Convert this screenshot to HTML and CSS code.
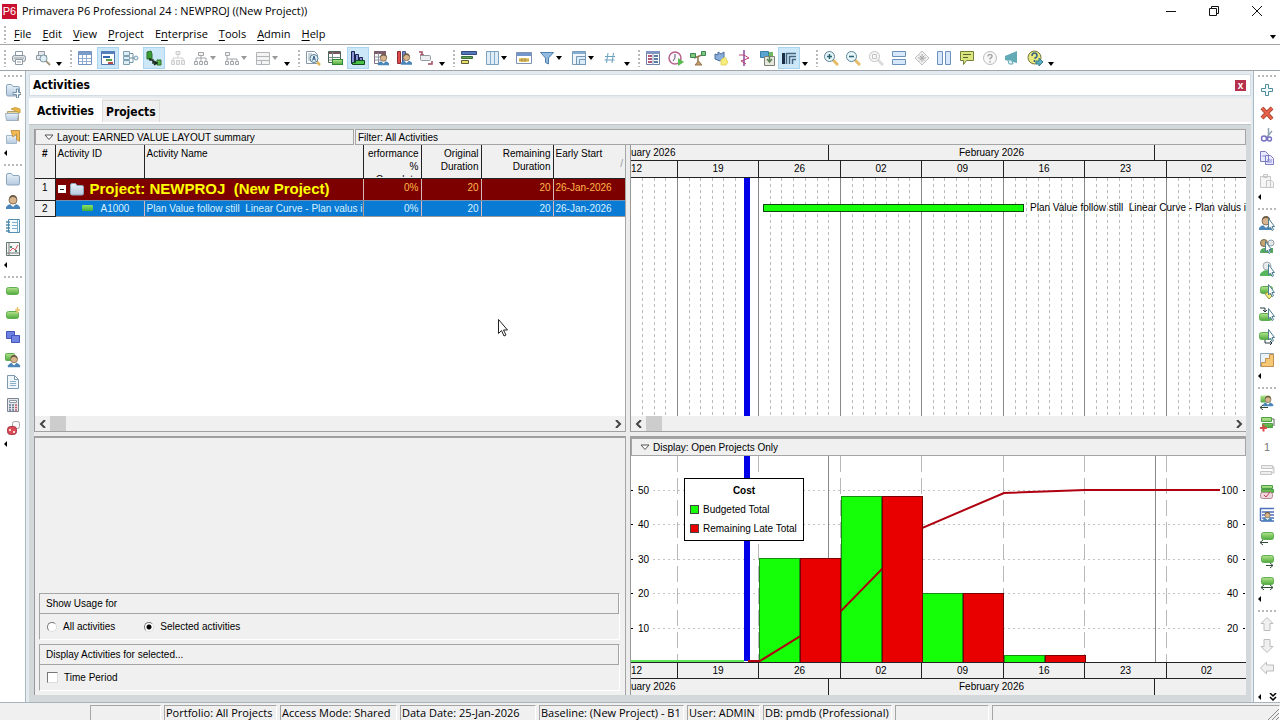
FILE: index.html
```html
<!DOCTYPE html>
<html lang="en">
<head>
    <meta charset="UTF-8">
    <meta name="viewport" content="width=device-width, initial-scale=1.0">
    <title>Primavera P6 Professional 24 : NEWPROJ ((New Project))</title>
    <link rel="stylesheet" href="styles.css">
</head>
<body>
    <!-- icon sprite -->
    <svg class="sprite" aria-hidden="true">
        <defs>
            <linearGradient id="green" x1="0" y1="0" x2="0" y2="1">
                <stop offset="0" stop-color="#b4e48e"/><stop offset="1" stop-color="#4eaa3c"/>
            </linearGradient>
            <linearGradient id="folderFill" x1="0" y1="0" x2="0" y2="1">
                <stop offset="0" stop-color="#e8f1fa"/><stop offset="1" stop-color="#b4c9de"/>
            </linearGradient>
        </defs>
        <symbol id="pill" viewBox="0 0 16 16"><rect x="1.5" y="4.5" width="12" height="7" rx="2" fill="url(#green)" stroke="#5fae52"/></symbol>
        <symbol id="person" viewBox="0 0 16 16"><path d="M1 15v-2q2-3 5-3h4q3 0 5 3v2z" fill="#4a86b8"/><path d="M5 10l3 3 3-3z" fill="#fff"/><circle cx="8" cy="6" r="4" fill="#d8b48c" stroke="#85735a"/><path d="M4 6q0-5 4-5t4 5q-1-3-4-3T4 6z" fill="#6c5c48"/></symbol>
        <symbol id="pointer" viewBox="0 0 16 16"><path d="M9.500 3.500v10.500l2-2 1.500 3.500 1.500-.8-1.500-3.200h2.500z" fill="#fff" stroke="#4f7f93"/></symbol>
        <symbol id="lens" viewBox="0 0 16 16"><path d="M10 10l5 5" stroke="#e4bd66" stroke-width="3"/><circle cx="6.500" cy="6.500" r="5" fill="#e6f4fb" stroke="#5c8494"/></symbol>
        <symbol id="folder" viewBox="0 0 16 16"><path d="M1.500 4q0-1.500 1.500-1.500h3.500l1.500 2h5q1.500 0 1.500 1.500v6.500q0 1.500-1.500 1.500H3q-1.500 0-1.500-1.500z" fill="url(#folderFill)" stroke="#8ba5bd"/></symbol>

        <symbol id="print" viewBox="0 0 16 16"><path d="M4.500 6V1.500h7V6" fill="#fff" stroke="#8f9ba4"/><rect x="1.500" y="5.500" width="13" height="6" rx="2" fill="#dfe4e8" stroke="#87939c"/><path d="M4.500 9.500h7v5h-7z" fill="#fff" stroke="#8f9ba4"/><path d="M3 8h10M6 12h4" stroke="#9ba6ad"/></symbol>
        <symbol id="preview" viewBox="0 0 16 16"><path d="M3.500 5V1.500h6V5M1.500 5.500h10v4h-10z" fill="#e6eaee" stroke="#8f9ba4"/><circle cx="8.500" cy="8.500" r="3.500" fill="#e1f0f6" stroke="#7892a0"/><path d="M11 11l4 4" stroke="#a29880" stroke-width="2"/></symbol>
        <symbol id="table" viewBox="0 0 16 16"><path d="M1.500 1.500h13v13h-13z" fill="#fff" stroke="#7292c0"/><path d="M2 2h12v3H2z" fill="#7b9cca"/><path d="M2 8.500h12M2 11.500h12M5.500 5v9M9.500 5v9" stroke="#94abd0"/></symbol>
        <symbol id="gantt" viewBox="0 0 16 16"><path d="M1.500 1.500h13v13h-13z" fill="#fff" stroke="#5277ad"/><path d="M1 1h14v3H1z" fill="#5580b9"/><path d="M3 6h7v2H3z" fill="#3367b0"/><path d="M6 9h6v2H6z" fill="#57a14a"/><path d="M8 12h5v2H8z" fill="#bc4b4b"/></symbol>
        <symbol id="network" viewBox="0 0 16 16"><path d="M6 3.500h4v9H6M10 8h2M4 8h6" fill="none" stroke="#6b90a2"/><path d="M.5 1.500h6v4h-6zM.5 6.500h6v3h-6zM.5 10.500h6v4h-6z" fill="#dfeef5" stroke="#7c9fb2"/><circle cx="13" cy="8" r="2" fill="#e1edf3" stroke="#7c9fb2"/></symbol>
        <symbol id="trace" viewBox="0 0 16 16"><path d="M1 2l4-1 1 3v5H1z" fill="#3d9c34" stroke="#2b6e28"/><path d="M11 10h4v5h-4z" fill="#58b64c" stroke="#2b6e28"/><path d="M4 8v2h3v3h4M8 11l3 2-3 2" fill="none" stroke="#16291a" stroke-width="1.500"/></symbol>
        <symbol id="tree" viewBox="0 0 16 16"><path d="M8 5v3M3 11V8h10v3M8 8v3" fill="none" stroke="#a2a6a8"/><path d="M5.500 2.500h5v3h-5zM1.500 11.500h3v3h-3zM6.500 11.500h3v3h-3zM11.500 11.500h3v3h-3z" fill="#f3f3f3" stroke="#a2a6a8"/></symbol>
        <symbol id="treelight" viewBox="0 0 16 16"><path d="M8 5v3M3 11V8h10v3" fill="none" stroke="#d0d0d0"/><path d="M6 1.500h4v3H6zM1.500 10.500h3v4h-3zM6.500 10.500h3v4h-3zM11.500 10.500h3v4h-3z" fill="#eee" stroke="#cdcdcd"/></symbol>
        <symbol id="branch" viewBox="0 0 16 16"><path d="M3 5v4h10v2M8 9v2M3 9v2" fill="none" stroke="#a2a6a8"/><path d="M1.500 2.500h4v3h-4zM1.500 11.500h3v3h-3zM6.500 11.500h3v3h-3zM11.500 11.500h3v3h-3z" fill="#f3f3f3" stroke="#a2a6a8"/></symbol>
        <symbol id="form" viewBox="0 0 16 16"><path d="M1.500 2.500h13v12h-13zM2 6.500h12M2 10.500h12M6.500 10v4" fill="#f4f4f4" stroke="#b2b5b6"/></symbol>
        <symbol id="docfind" viewBox="0 0 16 16"><path d="M1.500 1.500h8l3 3v9h-11z" fill="#fff" stroke="#8598a8"/><path d="M3 4h4M3 6h3M3 8h2M3 10h2" stroke="#9aabba"/><circle cx="9" cy="8.500" r="4" fill="#e1f2fb" stroke="#577c95"/><path d="M7.500 10.500L9 6l1.500 4.500M8 9h2" fill="none" stroke="#3c5f7e"/><path d="M12 12l3 3" stroke="#dfb65a" stroke-width="2.500"/></symbol>
        <symbol id="sheet" viewBox="0 0 16 16"><path d="M1.500 1.500h12v11h-12z" fill="#fff" stroke="#4b6456"/><path d="M2 2h11v2H2z" fill="#7d5560"/><path d="M2 7.500h11M2 10h11M5.500 2v10" stroke="#788b80"/><rect x="5.500" y="9.500" width="10" height="5" fill="url(#green)" stroke="#2f8a36"/></symbol>
        <symbol id="bars" viewBox="0 0 16 16"><path d="M1.500 1.500h3v12h-3zM5.500 4.500h3v9h-3zM9.500 7.500h3v6h-3z" fill="#8793d2" stroke="#19234d"/><path d="M5.500 10.500h9v4h-12v-2h3z" fill="#4ac048" stroke="#134c1e"/></symbol>
        <symbol id="ressheet" viewBox="0 0 16 16"><path d="M1.500 1.500h11v12h-11z" fill="#fff" stroke="#7f7282"/><path d="M1 1h12v3H1z" fill="#7c5d6b"/><path d="M2 7h10M2 10h10M5.500 3v10" stroke="#8c93a0"/><use href="#person" x="4" y="3" width="13" height="13"/></symbol>
        <symbol id="resbars" viewBox="0 0 16 16"><path d="M1.500 1.500h3v12h-3z" fill="#df4a4a" stroke="#8f2d36"/><path d="M6.500 1.500h3v12h-3z" fill="#7288cc" stroke="#47598f"/><use href="#person" x="4" y="2" width="13" height="14"/></symbol>
        <symbol id="reslink" viewBox="0 0 16 16"><path d="M1 2h3v3M2 5h4M10 14h4v-3" fill="none" stroke="#9f4a5b" stroke-width="1.500"/><rect x="2.500" y="5.500" width="10" height="5" rx="1" fill="#eceff0" stroke="#929b9f"/></symbol>
        <symbol id="layoutbars" viewBox="0 0 16 16"><path d="M.5 1.500h15v3H.5z" fill="#5379bb" stroke="#324b80"/><path d="M.5 6.500h11v2H.5z" fill="#64a35a" stroke="#397038"/><path d="M.5 10.500h7v3h-7z" fill="#e7df66" stroke="#5f5d36"/></symbol>
        <symbol id="columns" viewBox="0 0 16 16"><path d="M2.500 1.500h12v13h-12z" fill="#dfedf8" stroke="#7da1bd"/><path d="M6.500 2v12M10.500 2v12" stroke="#86abc8"/></symbol>
        <symbol id="timescale" viewBox="0 0 16 16"><path d="M.5 2.500h15v11H.5z" fill="#fff" stroke="#7e91b5"/><path d="M1 3h14v3H1z" fill="#7397cb"/><path d="M3 8h10v4H3z" fill="#eed06f"/><path d="M6 8v4M9 8v4M3 10h10" stroke="#a98c4d"/></symbol>
        <symbol id="filter" viewBox="0 0 16 16"><path d="M1.500 2.500h13L9.500 8v6l-3-1.500V8z" fill="#91bbe0" stroke="#517faa"/></symbol>
        <symbol id="group" viewBox="0 0 16 16"><path d="M1.500 1.500h13v13h-13z" fill="#eff6fb" stroke="#7b9cb7"/><path d="M2 2h12v2H2z" fill="#85add0"/><path d="M5.500 6.500h9v8h-9zM8.500 9.500h6v5h-6z" fill="#dcebf6" stroke="#7497b5"/></symbol>
        <symbol id="hash" viewBox="0 0 16 16"><path d="M6 3L4.500 13M11.500 3L10 13M3 6.500h10M2.500 10h10" fill="none" stroke="#6ba1bf"/></symbol>
        <symbol id="details" viewBox="0 0 16 16"><path d="M1.500 1.500h13v13h-13z" fill="#fff" stroke="#6d7fa5"/><path d="M1 1h14v3H1z" fill="#7f96c3"/><path d="M3 6h4M3 9h4M3 12h4" stroke="#ad5876" stroke-width="2"/><path d="M9 6h4M9 9h4M9 12h4" stroke="#597da1" stroke-width="2"/><path d="M8 4v11" stroke="#8f9dbb"/></symbol>
        <symbol id="clock" viewBox="0 0 16 16"><circle cx="7" cy="8" r="6" fill="#fff8fc" stroke="#b8628b" stroke-width="1.500"/><path d="M7 4v4l-2 3" fill="none" stroke="#565671"/><path d="M10 8l6 4-6 4z" fill="#5abb51"/></symbol>
        <symbol id="level" viewBox="0 0 16 16"><path d="M4 8l8-3M8 7v5" stroke="#947652" stroke-width="1.500"/><path d="M5 15h7l-3.500-4z" fill="#c49965" stroke="#947652"/><path d="M.5 3.500h5v4h-5zM11.500 1.500h4v4h-4z" fill="#7fc77d" stroke="#3b8652"/></symbol>
        <symbol id="spot" viewBox="0 0 16 16"><path d="M2 4l3 1V2l3 2 3-2v6l-4 3-5-2z" fill="#8aaedb" stroke="#4c6d9b"/><path d="M8 10l4-3 3 5-2 3H8z" fill="#f6ec7c" stroke="#e3d768"/></symbol>
        <symbol id="progress" viewBox="0 0 16 16"><path d="M8 0v16" stroke="#8748a3" stroke-width="1.500"/><path d="M3 5h5l5 3-8 3 5 3" fill="none" stroke="#bd4370"/></symbol>
        <symbol id="store" viewBox="0 0 16 16"><path d="M1.500 1.500h8v6h-8z" fill="#5aa4d1" stroke="#397da5"/><path d="M5.500 6.500h10v9h-10z" fill="#e7e7e0" stroke="#7c8174"/><path d="M10.500 4v7M8 9l2.500 3L13 9" fill="none" stroke="#5d8455" stroke-width="1.500"/><path d="M10 2h4v4h-4z" fill="#70b761"/></symbol>
        <symbol id="legend" viewBox="0 0 16 16"><path d="M1 3h3v11H1z" fill="#1b3046"/><path d="M5.500 14V3.500H15M8.500 14V6.500H15M11.500 14V9.500H15" fill="none" stroke="#44647f" stroke-width="1.500"/></symbol>
        <symbol id="zoomin" viewBox="0 0 16 16"><use href="#lens"/><path d="M4 6.500h5M6.500 4v5" stroke="#2b646e" stroke-width="1.500"/></symbol>
        <symbol id="zoomout" viewBox="0 0 16 16"><use href="#lens"/><path d="M4 6.500h5" stroke="#2b646e" stroke-width="1.500"/></symbol>
        <symbol id="zoomoff" viewBox="0 0 16 16"><path d="M10 10l5 5" stroke="#dcdcdc" stroke-width="3"/><circle cx="6.500" cy="6.500" r="5" fill="#f7f7f7" stroke="#c4c4c4"/><path d="M4.500 4.500h4v4h-4z" fill="none" stroke="#c4c4c4"/></symbol>
        <symbol id="splith" viewBox="0 0 16 16"><path d="M1.500 1.500h13v5h-13zM1.500 9.500h13v5h-13z" fill="#d7e8fb" stroke="#6d91bd"/></symbol>
        <symbol id="splitv" viewBox="0 0 16 16"><path d="M1.500 1.500h5v13h-5zM9.500 1.500h5v13h-5z" fill="#d7e8fb" stroke="#6d91bd"/></symbol>
        <symbol id="diamond" viewBox="0 0 16 16"><path d="M8 1l7 7-7 7-7-7z" fill="#f0f0f0" stroke="#c0c0c0"/><path d="M8 4v8M4 8h8M5.500 5.500l5 5M10.500 5.500l-5 5" stroke="#a9a9a9"/></symbol>
        <symbol id="note" viewBox="0 0 16 16"><path d="M1.500 1.500h13v9h-7l-3 4v-4h-3z" fill="#dce57e" stroke="#75803a"/><path d="M4 4.500h8M4 7.500h5" stroke="#58632f"/></symbol>
        <symbol id="helpoff" viewBox="0 0 16 16"><circle cx="8" cy="8" r="6.500" fill="#f8f8f8" stroke="#bcbcbc"/><path d="M6 6.500q0-2 2-2t2 2q0 1-2 2v1M8 11v1.500" fill="none" stroke="#aaa" stroke-width="1.500"/></symbol>
        <symbol id="horn" viewBox="0 0 16 16"><path d="M1 6l12-5v12L1 10z" fill="#62abb6"/><path d="M4 10l1 4h4l-1-3" fill="#e3f1f3" stroke="#62abb6"/></symbol>
        <symbol id="help" viewBox="0 0 16 16"><circle cx="7.500" cy="7.500" r="6.500" fill="#e8e87d" stroke="#74753a"/><path d="M5 6q0-3 2.500-3T10 6q0 1-2.500 2.500M7.500 10v2" fill="none" stroke="#355f80" stroke-width="1.500"/><path d="M9 11h3V8l4 4-4 4v-2H9z" fill="#58aebd" stroke="#377c8c"/></symbol>

        <symbol id="addfolder" viewBox="0 0 16 16"><use href="#folder"/><path d="M11.500 7v3.500H8v2h3.500V16h2v-3.500H16v-2h-2.500V7z" fill="#fff" stroke="#6d8ea4"/></symbol>
        <symbol id="openfolder" viewBox="0 0 16 16"><path d="M2.500 5.500h11v9h-11z" fill="#e4d59b" stroke="#b39e6b"/><path d="M6 3q4-3 9 0v4l-4-2z" fill="#eeb93f" stroke="#c9a048"/><path d="M.5 7.500h13l-1 7h-11z" fill="url(#folderFill)" stroke="#9db1c0"/></symbol>
        <symbol id="closefolder" viewBox="0 0 16 16"><path d="M1.500 6.500h10v8h-10z" fill="url(#folderFill)" stroke="#a3b9cb"/><path d="M6 1.500h8.500v11l-3-2V5L8 8z" fill="#f2ba54" stroke="#c2914b"/></symbol>
        <symbol id="book" viewBox="0 0 16 16"><path d="M3.500 1.500h11v13h-11z" fill="#f5fbff" stroke="#538fae"/><path d="M1 4h4M1 7h4M1 10h4M1 13h4" stroke="#528bac" stroke-width="1.500"/><path d="M7 4.500h6M7 7.500h6M7 10.500h6M12.500 2v12" stroke="#80b1cb"/></symbol>
        <symbol id="chart" viewBox="0 0 16 16"><path d="M1.500 1.500h13v13h-13z" fill="#f4f5f5" stroke="#61766c"/><path d="M4 2v12M2 12h12" stroke="#777"/><path d="M5 10l3-3 2 2 3-5" fill="none" stroke="#d24f5e"/><path d="M5 5h2v2H5zM10 9h2v2h-2z" fill="#4e8872"/></symbol>
        <symbol id="addpill" viewBox="0 0 16 16"><use href="#pill" y="1"/><path d="M12.500 1v6M10 4h5" stroke="#e8c368" stroke-width="1.500"/></symbol>
        <symbol id="windows" viewBox="0 0 16 16"><path d="M1.500 2.500h8v7h-8z" fill="#6d80df" stroke="#4355b8"/><path d="M6.500 6.500h8v7h-8z" fill="#7183e3" stroke="#4355b8"/></symbol>
        <symbol id="pillperson" viewBox="0 0 16 16"><rect x=".5" y="1.500" width="9" height="7" rx="1" fill="url(#green)" stroke="#62aa52"/><use href="#person" x="2" y="2" width="14" height="14"/></symbol>
        <symbol id="doc" viewBox="0 0 16 16"><path d="M2.500 1.500h7l4 4v9h-11zM9.500 1.500v4h4" fill="#f0f7fc" stroke="#7d9ab1"/><path d="M5 7.500h6M5 9.500h6M5 11.500h6" stroke="#8cafc8"/></symbol>
        <symbol id="calc" viewBox="0 0 16 16"><path d="M2.500 1.500h11v13h-11z" fill="#e5e8ed" stroke="#7b8491"/><path d="M4.500 3.500h7v2h-7z" fill="#fff" stroke="#8f9aa7"/><path d="M4 8h2M7 8h2M4 10.500h2M7 10.500h2M4 13h2M7 13h2" stroke="#65758a" stroke-width="1.500"/><path d="M10 8h2M10 10.500h2M10 13h2" stroke="#c65b62" stroke-width="1.500"/></symbol>
        <symbol id="dice" viewBox="0 0 16 16"><rect x="7.500" y="1.500" width="7" height="7" rx="2" fill="#f8f8f8" stroke="#a6a6a6"/><rect x="2.500" y="6.500" width="9" height="8" rx="3" fill="#d84b57" stroke="#a83643"/><path d="M4 10h2M8 12h2M10 4h1M12 6h1" stroke="#fff" stroke-width="1.500"/></symbol>

        <symbol id="plus" viewBox="0 0 16 16"><path d="M6.500 2.500h3v4h4v3h-4v4h-3v-4h-4v-3h4z" fill="#f4fbfd" stroke="#4f8d9d"/></symbol>
        <symbol id="delete" viewBox="0 0 16 16"><path d="M3 3l10 11M13 3L3 13" stroke="#a13e2b" stroke-width="4"/><path d="M3 3l10 11M13 3L3 13" stroke="#e6614a" stroke-width="2.500"/></symbol>
        <symbol id="cut" viewBox="0 0 16 16"><path d="M9.500 1v9M13 4l-6 7" stroke="#92a3b3" stroke-width="1.500"/><circle cx="5" cy="11.500" r="2.500" fill="none" stroke="#7973c4" stroke-width="1.500"/><circle cx="10.500" cy="12" r="2" fill="none" stroke="#7973c4" stroke-width="1.500"/></symbol>
        <symbol id="copy" viewBox="0 0 16 16"><path d="M1.500 1.500h5l3 3v7h-8zM6.500 5.500h5l3 3v6h-8z" fill="#e9e9ff" stroke="#7e7bc5"/><path d="M3 6h3M8 10h5M8 12h5" stroke="#8d8ad0"/></symbol>
        <symbol id="paste" viewBox="0 0 16 16"><path d="M1.500 3.500h10v11h-10zM4.500 1.500h4v3h-4zM7.500 7.500h5l2 2v5h-7z" fill="#f5f5f5" stroke="#c7c7c7"/></symbol>
        <symbol id="assignres" viewBox="0 0 16 16"><use href="#person" x="-1"/><use href="#pointer"/></symbol>
        <symbol id="assignrole" viewBox="0 0 16 16"><path d="M1 15q0-5 5-5h8v5z" fill="#55a95f"/><circle cx="5" cy="5" r="3.500" fill="#c8a673" stroke="#77654c"/><circle cx="12" cy="5" r="3" fill="#e4e8e8" stroke="#95a3a7"/><use href="#pointer" x="-3"/></symbol>
        <symbol id="role" viewBox="0 0 16 16"><path d="M1 15v-2q3-4 7-4t7 6z" fill="#55b85c"/><circle cx="8" cy="5" r="4" fill="#e6eaec" stroke="#a4acb0"/><use href="#pointer"/></symbol>
        <symbol id="assigncode" viewBox="0 0 16 16"><use href="#pill" y="-2"/><path d="M9 8l4 4-3 3-4-5z" fill="#f2ed78" stroke="#99974a"/><use href="#pointer" y="-3"/></symbol>
        <symbol id="assignpred" viewBox="0 0 16 16"><use href="#pill" x="-1" y="3"/><path d="M1 2h5v4M4 4l2 2 2-2" fill="none" stroke="#26393c"/><use href="#pointer" y="-1"/></symbol>
        <symbol id="assignsucc" viewBox="0 0 16 16"><use href="#pill" x="-1" y="-1"/><path d="M6 11v3h7M11 12l2 2-2 2" fill="none" stroke="#26393c"/><use href="#pointer" y="-3"/></symbol>
        <symbol id="step" viewBox="0 0 16 16"><path d="M1.500 1.500h13v13h-13z" fill="#eaf2fa" stroke="#93a4b4"/><path d="M2.500 14.500v-4h4v-4h4v-4h4v12z" fill="#f5c875" stroke="#c6914e"/></symbol>
        <symbol id="pillleft" viewBox="0 0 16 16"><use href="#pill" x="1" y="-2"/><path d="M1 12.500h8M4 10l-3 2.500L4 15" fill="none" stroke="#31493a"/></symbol>
        <symbol id="pillright" viewBox="0 0 16 16"><use href="#pill" x="1" y="-2"/><path d="M7 12.500h7M11 10l3 2.500-3 2.500" fill="none" stroke="#31493a"/></symbol>
        <symbol id="pillboth" viewBox="0 0 16 16"><use href="#pill" x="1" y="-2"/><path d="M2 12.500h12M5 10l-3 2.500L5 15M11 10l3 2.500-3 2.500" fill="none" stroke="#31493a"/></symbol>
        <symbol id="personleft" viewBox="0 0 16 16"><rect x="1.500" y="1.500" width="10" height="7" rx="1" fill="url(#green)"/><use href="#person" x="3" width="12" height="14"/><path d="M1 13.500h8M4 11l-3 2.500L4 16" fill="none" stroke="#31493a"/></symbol>
        <symbol id="pillstack" viewBox="0 0 16 16"><path d="M13 3h2v7" fill="none" stroke="#5a6b5c"/><path d="M2.500 1.500h10v4h-10zM3.500 7.500h10v4h-10z" fill="url(#green)" stroke="#4f9f49"/><path d="M1 12h7M4.500 8.500v7" stroke="#d74b4b" stroke-width="2"/></symbol>
        <symbol id="stackoff" viewBox="0 0 16 16"><path d="M2.500 3.500h11v3h-11zM1.500 9.500h11v3h-11zM13 5h2v6h-2" fill="#eee" stroke="#c5c5c5"/></symbol>
        <symbol id="stackcheck" viewBox="0 0 16 16"><path d="M2.500 1.500h11v3h-11zM2.500 5.500h12v3h-12z" fill="url(#green)" stroke="#4f9f49"/><rect x="1.500" y="8.500" width="12" height="6" rx="2" fill="#edd7dc" stroke="#b58992"/><path d="M5 11l2 2 4-5" fill="none" stroke="#c44253"/></symbol>
        <symbol id="reslist" viewBox="0 0 16 16"><path d="M1.500 14V1.500H15M3 5h12M3 8h12M3 11h12M2 14h13" fill="none" stroke="#4c70bd" stroke-width="1.500"/><use href="#person" x="3" y="4" width="11" height="11"/></symbol>
        <symbol id="up" viewBox="0 0 16 16"><path d="M8 1.500l6 6h-3v7H5v-7H2z" fill="#f0f0f0" stroke="#bdbdbd"/></symbol>
        <symbol id="down" viewBox="0 0 16 16"><path d="M8 14.500l6-6h-3v-7H5v7H2z" fill="#f0f0f0" stroke="#bdbdbd"/></symbol>
        <symbol id="left" viewBox="0 0 16 16"><path d="M1.500 8l6-6v3h7v6h-7v3z" fill="#f0f0f0" stroke="#bdbdbd"/></symbol>
        <symbol id="caret" viewBox="0 0 8 8"><path d="M1 2h6L4 6z"/></symbol>
        <symbol id="caretleft" viewBox="0 0 8 8"><path d="M5 1v6L2 4z"/></symbol>
        <symbol id="chevleft" viewBox="0 0 8 8"><path d="M6 0L2 4l4 4" fill="none" stroke="#444" stroke-width="2"/></symbol>
        <symbol id="chevright" viewBox="0 0 8 8"><path d="M2 0l4 4-4 4" fill="none" stroke="#444" stroke-width="2"/></symbol>
        <symbol id="tri" viewBox="0 0 10 8"><path d="M1 2h8L5 6.500z" fill="#fff" stroke="#555"/></symbol>
    </svg>

    <header class="titlebar">
        <span class="logo">P6</span>
        <h1>Primavera P6 Professional 24 : NEWPROJ ((New Project))</h1>
        <div class="window-buttons">
            <button type="button" aria-label="Minimize"><svg viewBox="0 0 12 12"><path d="M1 6.500h10"/></svg></button>
            <button type="button" aria-label="Restore"><svg viewBox="0 0 12 12"><path d="M1.500 3.500h7v7h-7zM3.500 3V1.500h7v7H9"/></svg></button>
            <button type="button" aria-label="Close"><svg viewBox="0 0 12 12"><path d="M1 1l10 10M11 1L1 11"/></svg></button>
        </div>
    </header>

    <nav class="menubar">
        <i class="grip"></i>
        <button type="button"><u>F</u>ile</button>
        <button type="button"><u>E</u>dit</button>
        <button type="button"><u>V</u>iew</button>
        <button type="button"><u>P</u>roject</button>
        <button type="button">E<u>n</u>terprise</button>
        <button type="button"><u>T</u>ools</button>
        <button type="button"><u>A</u>dmin</button>
        <button type="button"><u>H</u>elp</button>
        <svg class="caret menu-more"><use href="#caret"/></svg>
    </nav>

    <!-- toolbars are filled from script.js -->
    <div class="toolbar" id="toolbar"></div>

    <div class="main">
        <aside class="sidebar" id="left-bar"></aside>

        <main class="workspace">
            <div class="caption">
                <h2>Activities</h2>
                <button type="button" class="close" aria-label="Close view">x</button>
            </div>
            <div class="tabs">
                <button type="button" class="tab active">Activities</button>
                <button type="button" class="tab">Projects</button>
            </div>

            <div class="frame">
                <div class="layout-bar">
                    <button type="button" class="layout-name"><svg class="tri"><use href="#tri"/></svg>Layout: EARNED VALUE LAYOUT summary</button>
                    <div class="filter-name">Filter: All Activities</div>
                </div>

                <div class="top-panes">
                    <section class="pane grid-pane">
                        <table class="activities">
                            <colgroup>
                                <col class="c-num"><col class="c-id"><col class="c-name"><col class="c-perf"><col class="c-orig"><col class="c-rem"><col class="c-start">
                            </colgroup>
                            <thead>
                                <tr>
                                    <th class="num">#</th>
                                    <th>Activity ID</th>
                                    <th>Activity Name</th>
                                    <th class="right"><div class="clip">erformance<br>%<br>Complete</div></th>
                                    <th class="right">Original<br>Duration</th>
                                    <th class="right">Remaining<br>Duration</th>
                                    <th>Early Start<span class="sort">/</span></th>
                                </tr>
                            </thead>
                            <tbody>
                                <tr class="project">
                                    <td class="num">1</td>
                                    <td colspan="2" class="project-name">
                                        <div><span class="collapse"></span><svg class="icon"><use href="#folder"/></svg><b>Project: NEWPROJ&nbsp; (New Project)</b></div>
                                    </td>
                                    <td class="right">0%</td>
                                    <td class="right">20</td>
                                    <td class="right">20</td>
                                    <td>26-Jan-2026</td>
                                </tr>
                                <tr class="activity">
                                    <td class="num">2</td>
                                    <td class="activity-id"><div><span class="bullet"></span>A1000</div></td>
                                    <td class="activity-name">Plan Value follow still&nbsp; Linear Curve - Plan valus i</td>
                                    <td class="right">0%</td>
                                    <td class="right">20</td>
                                    <td class="right">20</td>
                                    <td>26-Jan-2026</td>
                                </tr>
                            </tbody>
                        </table>
                        <div class="scrollbar">
                            <button type="button" aria-label="Scroll left"><svg><use href="#chevleft"/></svg></button>
                            <span class="thumb"></span>
                            <button type="button" aria-label="Scroll right"><svg><use href="#chevright"/></svg></button>
                        </div>
                    </section>

                    <section class="pane gantt-pane">
                        <div class="months"><span class="first">uary 2026</span><span>February 2026</span><span></span></div>
                        <div class="weeks"><span class="first">12</span><span>19</span><span>26</span><span>02</span><span>09</span><span>16</span><span>23</span><span>02</span></div>
                        <svg class="gantt">
                            <g id="gantt-lines"></g>
                            <rect x="113" width="6" height="100%" fill="#0000e8"/>
                            <rect x="132.500" y="26.500" width="260" height="7" fill="#14ff08" stroke="#0b4a0a"/>
                            <text x="399" y="33" xml:space="preserve">Plan Value follow still  Linear Curve - Plan valus i</text>
                        </svg>
                        <div class="scrollbar">
                            <button type="button" aria-label="Scroll left"><svg><use href="#chevleft"/></svg></button>
                            <span class="thumb"></span>
                            <button type="button" aria-label="Scroll right"><svg><use href="#chevright"/></svg></button>
                        </div>
                    </section>
                </div>

                <div class="bottom-panes">
                    <section class="pane options">
                        <fieldset>
                            <legend>Show Usage for</legend>
                            <div class="choices">
                                <label><input type="radio" name="usage">All activities</label>
                                <label><input type="radio" name="usage" checked>Selected activities</label>
                            </div>
                        </fieldset>
                        <fieldset>
                            <legend>Display Activities for selected...</legend>
                            <div class="choices">
                                <label><input type="checkbox">Time Period</label>
                            </div>
                        </fieldset>
                    </section>

                    <section class="pane profile">
                        <button type="button" class="display-name"><svg class="tri"><use href="#tri"/></svg>Display: Open Projects Only</button>
                        <div class="chart">
                            <svg id="profile-chart"></svg>
                            <div class="legend">
                                <b>Cost</b>
                                <span><i class="budgeted"></i>Budgeted Total</span>
                                <span><i class="remaining"></i>Remaining Late Total</span>
                            </div>
                        </div>
                        <div class="weeks"><span class="first">12</span><span>19</span><span>26</span><span>02</span><span>09</span><span>16</span><span>23</span><span>02</span></div>
                        <div class="months"><span class="first">uary 2026</span><span>February 2026</span><span></span></div>
                    </section>
                </div>
            </div>
        </main>

        <aside class="sidebar" id="right-bar"></aside>
    </div>

    <footer class="statusbar">
        <span></span>
        <span>Portfolio: All Projects</span>
        <span>Access Mode: Shared</span>
        <span>Data Date: 25-Jan-2026</span>
        <span>Baseline: (New Project) - B1</span>
        <span>User: ADMIN</span>
        <span>DB: pmdb (Professional)</span>
        <span></span>
        <span class="last"><svg viewBox="0 0 12 12"><path d="M1 12L12 1M5 12l7-7M9 12l3-3" stroke="#888"/></svg></span>
    </footer>

    <svg class="cursor" viewBox="0 0 12 20"><path d="M1.500 1.500v14l3-3 2.500 5.500 2-1-2.500-5h4z" fill="#fff" stroke="#222"/></svg>

    <script src="script.js"></script>
</body>
</html>
```
FILE: styles.css
```css
* {
    box-sizing: border-box;
}
body {
    margin: 0;
    height: 100vh;
    display: flex;
    flex-direction: column;
    overflow: hidden;
    background-color: #fff;
    color: #000;
    font-family: "Liberation Sans", Arial, sans-serif;
    font-size: 10px;
    line-height: 13px;
}
button {
    padding: 0;
    border: none;
    background: none;
    color: inherit;
    font: inherit;
}
.sprite {
    position: absolute;
    width: 0;
    height: 0;
}
.icon {
    display: block;
    width: 16px;
    height: 16px;
    flex: none;
}
.caret {
    display: block;
    width: 8px;
    height: 8px;
    flex: none;
}

/* title and menu */
.titlebar {
    display: flex;
    align-items: center;
    height: 22px;
    padding: 0 2px;
}
.logo {
    width: 15px;
    height: 15px;
    margin-right: 5px;
    background-color: #c8102e;
    color: #fff;
    font-size: 11px;
    line-height: 15px;
    text-align: center;
}
.titlebar h1 {
    flex: 1;
    margin: 0;
    font-family: "Open Sans", "Segoe UI", sans-serif;
    font-size: 11px;
    font-weight: normal;
    line-height: 16px;
}
.window-buttons {
    display: flex;
}
.window-buttons button {
    width: 43px;
    height: 20px;
}
.window-buttons svg {
    display: block;
    width: 12px;
    height: 12px;
    margin: 0 auto;
    fill: none;
    stroke: #111;
}
.menubar {
    display: flex;
    align-items: center;
    gap: 11px;
    height: 23px;
    padding: 2px 3px 0;
    border-bottom: 1px solid #a3a7aa;
    font-family: "Open Sans", "Segoe UI", sans-serif;
    font-size: 11px;
    line-height: 16px;
}
.menubar u {
    text-underline-offset: 2px;
}
.menu-more {
    align-self: flex-end;
    margin: 0 0 3px auto;
}

/* toolbars */
.grip {
    flex: none;
    width: 4px;
    height: 18px;
    background: radial-gradient(circle, #b9b9b9 1px, transparent 1px) 0 0 / 4px 4px;
}
.menubar .grip {
    margin-right: -4px;
}
.toolbar {
    display: flex;
    gap: 6px;
    height: 26px;
    padding: 0 3px;
    border-bottom: 1px solid #9fa6ab;
}
.tool-group {
    display: flex;
    align-items: center;
    justify-content: space-between;
}
.g-print { width: 60px; }
.g-view { width: 222px; }
.g-show { width: 149px; }
.g-format { width: 179px; }
.g-tools { width: 172px; }
.g-zoom { width: 240px; }
.tool {
    display: flex;
    align-items: center;
    justify-content: flex-start;
    width: 22px;
    height: 22px;
    padding-left: 3px;
}
.tool.drop {
    width: 30px;
}
.tool.on {
    background-color: #cce8f8;
    outline: 1px solid #a9d5f0;
    outline-offset: -1px;
}
.tool.faded .caret {
    fill: #999;
}
.tool-group > .caret {
    align-self: flex-end;
    margin-bottom: 2px;
}
.main {
    flex: 1;
    display: flex;
    min-height: 0;
    background-color: #e4ebf0;
}
.sidebar {
    display: flex;
    flex-direction: column;
    gap: 6px;
    width: 26px;
    padding-top: 3px;
    background-color: #fff;
    border-right: 1px solid #a9bac5;
}
#right-bar {
    width: 27px;
    border-right: none;
    border-left: 1px solid #a9bac5;
}
.sidebar .tool-group {
    flex-direction: column;
}
.sidebar .grip {
    width: 20px;
    height: 4px;
}
.sidebar .tool-group > .caret {
    align-self: flex-start;
    margin: 0 0 0 2px;
}
.s-project { height: 83px; }
.s-enterprise { height: 106px; }
.s-activity { height: 173px; }
.s-edit { height: 127px; }
.s-assign { height: 173px; }
.s-link { height: 217px; }
.sidebar .s-move {
    height: 92px;
    justify-content: flex-start;
}
.one {
    height: 22px;
    color: #777;
    font-size: 11px;
    line-height: 22px;
}
.bar-foot {
    display: flex;
    align-self: stretch;
    justify-content: space-between;
    align-items: center;
    margin-top: auto;
    padding: 0 3px 0 2px;
}
.bar-foot svg:last-child {
    width: 8px;
    height: 8px;
}

/* workspace */
.workspace {
    flex: 1;
    min-width: 0;
    display: flex;
    flex-direction: column;
    padding: 3px 2px 0 3px;
}
.caption {
    display: flex;
    align-items: center;
    justify-content: space-between;
    height: 22px;
    padding: 0 4px 0 3px;
    background-color: #fff;
    border: 1px solid #d3dde5;
}
.caption h2,
.tab {
    margin: 0;
    font-family: "DejaVu Sans Condensed", "DejaVu Sans", Tahoma, sans-serif;
    font-size: 12px;
    font-weight: bold;
    line-height: 18px;
}
.close {
    width: 11px;
    height: 11px;
    background-color: #b5304a;
    color: #fff;
    font-weight: bold;
    line-height: 9px;
}
.tabs {
    display: flex;
    align-items: flex-end;
    height: 26px;
    margin-top: 2px;
    background-color: #f0f0f0;
    border-bottom: 2px solid #fff;
}
.tab {
    height: 22px;
    padding: 0 3px;
    border: 1px solid #dcdcdc;
    border-bottom: none;
}
.tab.active {
    height: 24px;
    padding: 0 7px;
    background-color: #fff;
    border-color: #fff;
}
.frame {
    flex: 1;
    display: flex;
    flex-direction: column;
    min-height: 0;
    padding: 4px 5px 7px;
    background-color: #d3d8da;
    border-top: 1px solid #bfc5c8;
}
.layout-bar {
    display: flex;
    height: 16px;
    gap: 1px;
    background-color: #f0f0f0;
    border-left: 1px solid #999;
}
.layout-name,
.filter-name,
.display-name {
    display: flex;
    align-items: center;
    border: 1px solid #a5a5a5;
    background-color: #f0f0f0;
    text-align: left;
}
.layout-name {
    width: 319px;
    padding-left: 8px;
}
.filter-name {
    flex: 1;
    padding-left: 2px;
}
.tri {
    width: 10px;
    height: 8px;
    margin-right: 3px;
}
.top-panes,
.bottom-panes {
    display: grid;
    grid-template-columns: 592px 1fr;
    column-gap: 4px;
    background-color: #ececec;
}
.top-panes {
    flex: 1;
    min-height: 0;
}
.bottom-panes {
    height: 263px;
    padding-top: 4px;
}
.pane {
    display: flex;
    flex-direction: column;
    min-width: 0;
    min-height: 0;
    overflow: hidden;
    background-color: #fff;
    border-left: 1px solid #999;
}
.top-panes .pane {
    border-bottom: 1px solid #a0a0a0;
}
.bottom-panes .pane {
    border-top: 2px solid #a0a0a0;
}
.grid-pane,
.options {
    border-right: 1px solid #a5a5a5;
}

/* activity table */
.activities {
    width: 590px;
    table-layout: fixed;
    border-collapse: collapse;
}
.c-num { width: 20px; }
.c-id { width: 89px; }
.c-name { width: 219px; }
.c-perf { width: 58px; }
.c-orig { width: 60px; }
.c-rem { width: 72px; }
.c-start { width: 72px; }
.activities th,
.activities td {
    padding: 0 2px;
    overflow: hidden;
    white-space: nowrap;
    text-align: left;
}
.activities th {
    position: relative;
    height: 33px;
    padding-top: 2px;
    background-color: #f0f0f0;
    border-right: 1px solid #222;
    border-bottom: 1px solid #222;
    font-weight: normal;
    vertical-align: top;
}
.activities .num {
    background-color: #f0f0f0;
    border-right: 1px solid #222;
    border-bottom: 1px solid #222;
    color: #000;
    text-align: center;
}
.activities .right {
    text-align: right;
}
.activities th.num {
    font-weight: bold;
}
.activities th:last-child,
.activities td:last-child {
    border-right: none;
}
.clip {
    height: 30px;
    overflow: hidden;
}
.sort {
    position: absolute;
    right: 2px;
    bottom: 8px;
    color: #999;
}
.activities td {
    border-right: 1px solid #d8b8b8;
}
.project td {
    height: 22px;
    background-color: #7d0000;
    border-bottom: 1px solid #6f8fb0;
    color: #ffb848;
}
.project td:not(.project-name) {
    padding-bottom: 4px;
}
.project-name div,
.activity-id div {
    display: flex;
    align-items: center;
}
.project-name b {
    margin-left: 5px;
    color: #ff0;
    font-size: 15px;
    line-height: 18px;
}
.collapse {
    width: 8px;
    height: 8px;
    margin-right: 3px;
    background: linear-gradient(#222, #222) center / 4px 1px no-repeat #fff;
}
.activity td {
    height: 16px;
    background-color: #0a7bd4;
    border-bottom: 1px solid #999;
    color: #d9f1ff;
}
.bullet {
    width: 11px;
    height: 6px;
    margin: 0 8px 0 24px;
    border-radius: 1px;
    background: linear-gradient(#8be068, #3fae3b);
}
.activities .activity-name {
    padding-right: 0;
    border: 1px solid #b09a90;
}
.scrollbar {
    display: flex;
    flex: none;
    align-items: center;
    height: 15px;
    margin-top: auto;
    background-color: #f0f0f0;
}
.scrollbar button {
    width: 15px;
    height: 15px;
}
.scrollbar button:last-child {
    margin-left: auto;
}
.scrollbar svg {
    display: block;
    width: 8px;
    height: 8px;
    margin: 0 auto;
}
.thumb {
    width: 16px;
    height: 15px;
    background-color: #cdcdcd;
}

/* timescale */
.months,
.weeks {
    display: grid;
    flex: none;
    height: 16px;
    background-color: #f0f0f0;
    border-bottom: 1px solid #222;
    line-height: 15px;
    text-align: center;
}
.months {
    grid-template-columns: 198px 326px 1fr;
}
.weeks {
    grid-template-columns: 47px 81px 82px 81px 82px 81px 82px 1fr;
    height: 17px;
    line-height: 16px;
}
.months span,
.weeks span {
    border-right: 1px solid #222;
}
.months span:last-child,
.weeks span:last-child {
    border-right: none;
}
.months .first,
.weeks .first {
    text-align: left;
}
.gantt {
    display: block;
    flex: 1;
    width: 100%;
    min-height: 0;
}

/* usage options */
.options {
    justify-content: flex-end;
    gap: 4px;
    padding: 0 5px 4px 4px;
    background-color: #f0f0f0;
}
fieldset {
    height: 47px;
    min-width: 0;
    margin: 0;
    padding: 0;
    border: 1px solid #a5a5a5;
    border-color: #a5a5a5 #fff #fff #a5a5a5;
}
fieldset legend {
    float: left;
    width: 100%;
    height: 20px;
    padding: 0 6px;
    border-bottom: 1px solid #a5a5a5;
    border-right: 1px solid #a5a5a5;
    line-height: 19px;
}
.choices {
    clear: both;
    display: flex;
    gap: 28px;
    padding: 6px 6px 0;
}
.choices label {
    display: flex;
    align-items: center;
}
.choices input {
    appearance: none;
    width: 11px;
    height: 11px;
    margin: 0 6px 0 1px;
    background-color: #fff;
    border: 1px solid #777;
    border-right-color: #ddd;
    border-bottom-color: #ddd;
}
.choices input[type="radio"] {
    width: 10px;
    height: 10px;
    border-radius: 50%;
}
.choices input[type="radio"]:checked {
    background: radial-gradient(circle, #000 2px, #fff 3px);
}

/* profile chart */
.display-name {
    height: 18px;
    padding-left: 8px;
}
.chart {
    position: relative;
    flex: 1;
    min-height: 0;
}
.chart > svg {
    display: block;
    width: 100%;
    height: 100%;
}
.chart .legend {
    position: absolute;
    left: 53px;
    top: 22px;
    display: flex;
    flex-direction: column;
    gap: 6px;
    width: 120px;
    padding: 5px;
    background-color: #fff;
    border: 1px solid #000;
}
.legend b {
    text-align: center;
}
.legend span {
    display: flex;
    align-items: center;
    white-space: nowrap;
}
.legend i {
    flex: none;
    width: 9px;
    height: 9px;
    margin-right: 4px;
    border: 1px solid #444;
}
.budgeted {
    background-color: #14ff08;
}
.remaining {
    background-color: #e80000;
}
.profile .weeks {
    border-top: 1px solid #222;
}
.profile .months {
    border-bottom: none;
}

/* status bar */
.statusbar {
    display: grid;
    grid-template-columns: 71px 113px 117px 136px 145px 73px 129px 94px 1fr;
    gap: 3px;
    height: 18px;
    padding: 2px 0 0 90px;
    background-color: #f0f0f0;
    border-top: 1px solid #a9b4ba;
    font-family: "Open Sans", Tahoma, sans-serif;
    font-size: 11px;
    line-height: 14px;
}
.statusbar span {
    padding-left: 1px;
    border: 1px solid #a5a5a5;
    border-color: #a5a5a5 #fff #fff #a5a5a5;
    white-space: nowrap;
}
.last svg {
    display: block;
    width: 12px;
    height: 12px;
    margin: 2px 0 0 auto;
}
.cursor {
    position: absolute;
    left: 497px;
    top: 318px;
    width: 12px;
    height: 20px;
}
```
FILE: script.js
```js
// toolbar contents: name, "+" = pressed, ">" = drop-down, "~" = disabled drop-down
const toolbars = {
    'toolbar': [
        ['g-print', ['print', 'preview']],
        ['g-view', ['table', 'gantt+', 'network', 'trace+', 'treelight', 'tree~', 'branch~', 'form~']],
        ['g-show', ['docfind', 'sheet', 'bars+', 'ressheet', 'resbars', 'reslink']],
        ['g-format', ['layoutbars', 'columns>', 'timescale', 'filter>', 'group>', 'hash']],
        ['g-tools', ['details', 'clock', 'level', 'spot', 'progress', 'store', 'legend+']],
        ['g-zoom', ['zoomin', 'zoomout', 'zoomoff', 'splith', 'diamond', 'splitv', 'note', 'helpoff', 'horn', 'help']]
    ],
    'left-bar': [
        ['s-project', ['addfolder', 'openfolder', 'closefolder']],
        ['s-enterprise', ['folder', 'person', 'book', 'chart']],
        ['s-activity', ['pill', 'addpill', 'windows', 'pillperson', 'doc', 'calc', 'dice']]
    ],
    'right-bar': [
        ['s-edit', ['plus', 'delete', 'cut', 'copy', 'paste']],
        ['s-assign', ['assignres', 'assignrole', 'role', 'assigncode', 'assignpred', 'assignsucc', 'step']],
        ['s-link', ['personleft', 'pillstack', '1', 'stackoff', 'stackcheck', 'reslist', 'pillleft', 'pillright', 'pillboth']],
        ['s-move', ['up', 'down', 'left']]
    ]
};

function toolHtml(item) {
    if (item === '1') return '<button type="button" class="one">1</button>';
    const flag = item.match(/[+>~]$/);
    const name = flag ? item.slice(0, -1) : item;
    const mark = flag ? flag[0] : '';
    let cls = 'tool';
    if (mark === '+') cls += ' on';
    if (mark === '>' || mark === '~') cls += ' drop';
    if (mark === '~') cls += ' faded';
    const arrow = cls.includes('drop') ? '<svg class="caret"><use href="#caret"/></svg>' : '';
    return `<button type="button" class="${cls}" aria-label="${name}"><svg class="icon"><use href="#${name}"/></svg>${arrow}</button>`;
}

for (const id in toolbars) {
    const more = id === 'toolbar' ? 'caret' : 'caretleft';
    document.getElementById(id).innerHTML = toolbars[id].map(([cls, items]) => {
        let end = `<svg class="caret"><use href="#${more}"/></svg>`;
        if (cls === 's-move') {
            end = `<div class="bar-foot">${end}<svg viewBox="0 0 8 8"><path d="M1 0l3 3 3-3M1 4l3 3 3-3" fill="none" stroke="#000" stroke-width="1.5"/></svg></div>`;
        }
        return `<div class="tool-group ${cls}"><i class="grip"></i>${items.map(toolHtml).join('')}${end}</div>`;
    }).join('');
}

const weeks = [-35, 47, 128, 210, 291, 373, 454, 536, 617];
const line = (x1, y1, x2, y2, extra) => `<line x1="${x1}" y1="${y1}" x2="${x2}" y2="${y2}" ${extra}/>`;

// gantt grid
let grid = '';
for (let w = 0; w < weeks.length - 1; w++) {
    const step = (weeks[w + 1] - weeks[w]) / 7;
    for (let d = 1; d < 7; d++) {
        const x = Math.round(weeks[w] + d * step) - 0.5;
        grid += line(x, 0, x, '100%', 'stroke="#bcbcbc" stroke-dasharray="3 3"');
    }
    grid += line(weeks[w] - 0.5, 0, weeks[w] - 0.5, '100%', 'stroke="#888"');
}
document.getElementById('gantt-lines').innerHTML = grid;

// cost profile
const base = 206;
let chart = '';
for (let v = 10; v <= 50; v += 10) {
    const y = Math.round(base - v * 3.45) + 0.5;
    chart += line(22, y, 590, y, 'stroke="#c4c4c4" stroke-dasharray="2 3"');
}
weeks.slice(1, 8).forEach(x => {
    chart += line(x - 0.5, 0, x - 0.5, base, 'stroke="#b8b8b8" stroke-dasharray="16 6"');
});
chart += line(197.5, 0, 197.5, base, 'stroke="#888"') + line(524.5, 0, 524.5, base, 'stroke="#888"');
chart += '<rect x="113" width="6" height="205" fill="#0000e8"/>';
chart += line(0, 205, 113, 205, 'stroke="#5fe85a" stroke-width="2"');

const costs = [[128, 30], [210, 48], [291, 20], [373, 2]];
const bar = (x, v, fill, edge) => {
    const h = Math.round(v * 3.45);
    return `<rect x="${x + 0.5}" y="${base - h + 0.5}" width="40" height="${h}" fill="${fill}" stroke="${edge}"/>`;
};
costs.forEach(([x, v]) => chart += bar(x, v, '#14ff08', '#178c14'));
chart += '<polyline points="117,205 129,205 210,155 291,72 373,37 454,34 589,34" fill="none" stroke="#b00010" stroke-width="2"/>';
costs.forEach(([x, v]) => chart += bar(x + 41, v, '#e80000', '#7d0000'));
for (let v = 10; v <= 50; v += 10) {
    const y = Math.round(base - v * 3.45);
    chart += `<text x="18" y="${y + 4}" text-anchor="end">${v}</text>` + line(0, y + 0.5, 2, y + 0.5, 'stroke="#000"');
    chart += `<text x="607" y="${y + 4}" text-anchor="end">${v * 2}</text>` + line(612, y + 0.5, 614, y + 0.5, 'stroke="#000"');
}
document.getElementById('profile-chart').innerHTML = chart;
```
